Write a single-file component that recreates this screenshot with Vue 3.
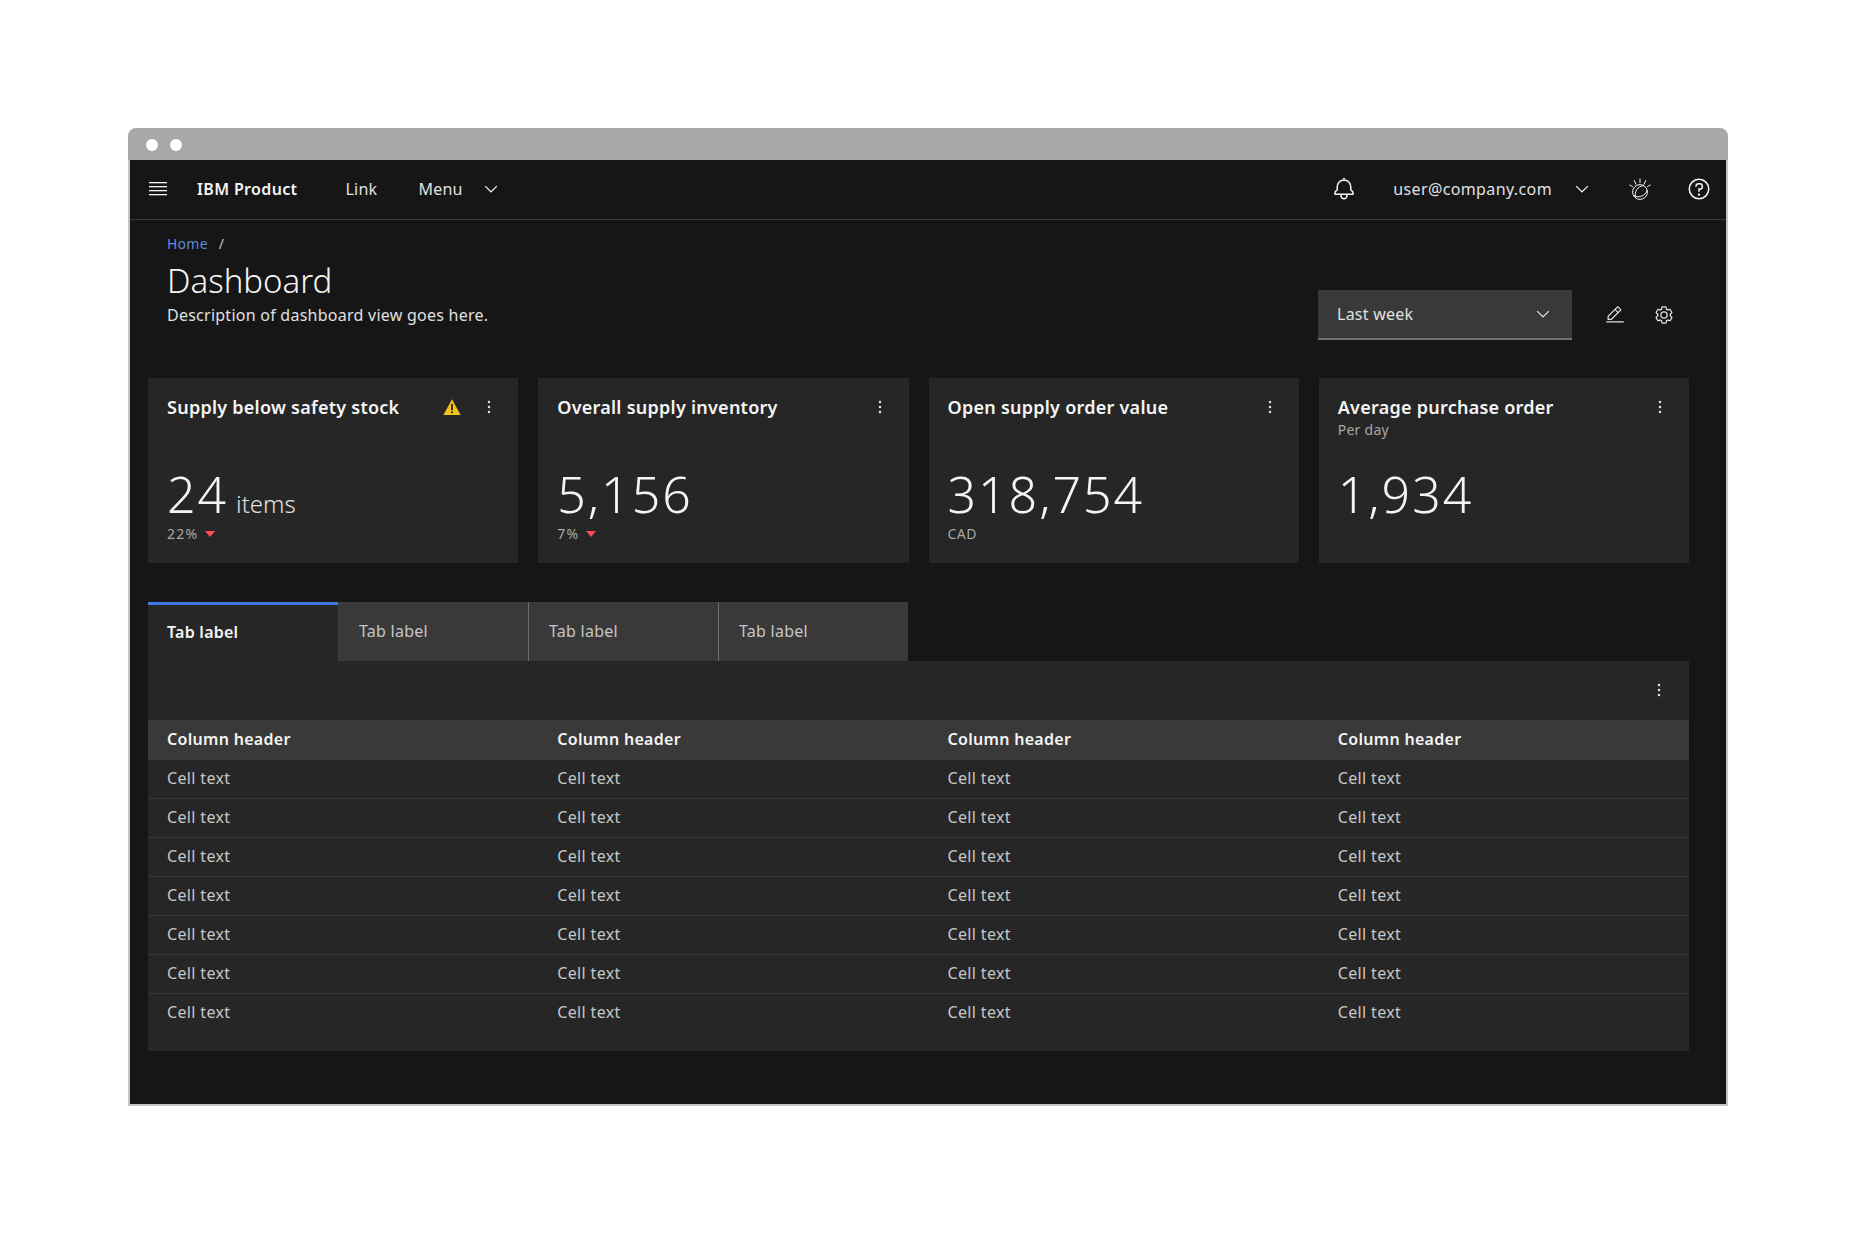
<script setup>
const cards = [
  { title: 'Supply below safety stock', value: '24', unit: 'items', delta: '22%', warn: true },
  { title: 'Overall supply inventory', value: '5,156', delta: '7%' },
  { title: 'Open supply order value', value: '318,754', note: 'CAD' },
  { title: 'Average purchase order', sub: 'Per day', value: '1,934' }
]
const tabs = ['Tab label', 'Tab label', 'Tab label', 'Tab label']
const columns = ['Column header', 'Column header', 'Column header', 'Column header']
const rows = [1, 2, 3, 4, 5, 6, 7]
</script>

<template>
  <div class="page">
    <div class="window">
      <div class="chrome">
        <span class="dot"></span>
        <span class="dot"></span>
      </div>

      <div class="app">
        <header class="topbar">
          <svg class="hamburger" viewBox="0 0 20 20" width="20" height="20" fill="currentColor">
            <rect x="1" y="3" width="18" height="1.3" />
            <rect x="1" y="7" width="18" height="1.3" />
            <rect x="1" y="11" width="18" height="1.3" />
            <rect x="1" y="15" width="18" height="1.3" />
          </svg>
          <span class="brand">IBM Product</span>
          <span class="nav-link">Link</span>
          <span class="nav-menu">Menu</span>
          <svg class="chev" viewBox="0 0 32 32" width="20" height="20" fill="currentColor"><path d="M16 22L6 12 7.4 10.6 16 19.2 24.6 10.6 26 12z" /></svg>

          <div class="topbar-right">
            <svg class="bell" viewBox="0 0 32 32" width="24" height="24" fill="currentColor"><path d="M28.7071,19.293,26,16.5859V13a10.0136,10.0136,0,0,0-9-9.9492V1H15V3.0508A10.0136,10.0136,0,0,0,6,13v3.5859L3.2929,19.293A1,1,0,0,0,3,20v3a1,1,0,0,0,1,1h7v.7768a5.152,5.152,0,0,0,4.5,5.1987A5.0057,5.0057,0,0,0,21,25V24h7a1,1,0,0,0,1-1V20A1,1,0,0,0,28.7071,19.293ZM19,25a3,3,0,0,1-6,0V24h6Zm8-3H5V20.4141L7.707,17.707A1,1,0,0,0,8,17V13a8,8,0,0,1,16,0v4a1,1,0,0,0,.293.707L27,20.4141Z" /></svg>
            <span class="user">user@company.com</span>
            <svg class="chev user-chev" viewBox="0 0 32 32" width="20" height="20" fill="currentColor"><path d="M16 22L6 12 7.4 10.6 16 19.2 24.6 10.6 26 12z" /></svg>
            <svg class="watson" viewBox="0 0 24 24" width="24" height="24" fill="none" stroke="currentColor" stroke-width="1">
              <circle cx="12" cy="15" r="7.4" />
              <path d="M12 1.5V6M6.2 3.2 8 7.6M17.8 3.2 16 7.6M1.4 7.8 4.8 9.8M22.6 7.8 19.2 9.8" />
              <path d="M19.2 13C17.8 18.6 11 21.6 5.4 18.4M15.8 8.6C9.8 9.4 6 14 7.6 21" />
            </svg>
            <svg class="help" viewBox="0 0 32 32" width="24" height="24" fill="currentColor">
              <path d="M16,2A14,14,0,1,0,30,16,14,14,0,0,0,16,2Zm0,26A12,12,0,1,1,28,16,12,12,0,0,1,16,28Z" />
              <circle cx="16" cy="23.5" r="1.5" />
              <path d="M17,8H15.5A4.49,4.49,0,0,0,11,12.5V13h2v-.5A2.5,2.5,0,0,1,15.5,10H17a2.5,2.5,0,0,1,0,5H15v4.5h2V17a4.5,4.5,0,0,0,0-9Z" />
            </svg>
          </div>
        </header>

        <main class="main">
          <section class="page-head">
            <div class="head-text">
              <div class="crumbs"><a class="crumb">Home</a><span class="slash">/</span></div>
              <h1 class="title">Dashboard</h1>
              <p class="desc">Description of dashboard view goes here.</p>
            </div>
            <div class="head-tools">
              <div class="dropdown">
                <span>Last week</span>
                <svg viewBox="0 0 32 32" width="20" height="20" fill="currentColor"><path d="M16 22L6 12 7.4 10.6 16 19.2 24.6 10.6 26 12z" /></svg>
              </div>
              <svg class="tool-edit" viewBox="0 0 32 32" width="20" height="20" fill="currentColor">
                <path d="M2 26H30V28H2z" />
                <path d="M25.4,9c0.8-0.8,0.8-2,0-2.8c0,0,0,0,0,0l-3.6-3.6c-0.8-0.8-2-0.8-2.8,0c0,0,0,0,0,0l-15,15V24h6.4L25.4,9z M20.4,4L24,7.6l-3,3L17.4,7L20.4,4z M6,22v-3.6l10-10l3.6,3.6l-10,10H6z" />
              </svg>
              <svg class="tool-gear" viewBox="0 0 32 32" width="20" height="20" fill="currentColor">
                <path d="M27,16.76c0-.25,0-.5,0-.76s0-.51,0-.77l1.92-1.68A2,2,0,0,0,29.3,11L26.94,7a2,2,0,0,0-1.73-1,2,2,0,0,0-.64.1l-2.43.82a11.35,11.35,0,0,0-1.31-.75l-.51-2.52a2,2,0,0,0-2-1.61H13.64a2,2,0,0,0-2,1.61l-.51,2.52a11.48,11.48,0,0,0-1.32.75L7.43,6.06A2,2,0,0,0,6.79,6,2,2,0,0,0,5.06,7L2.7,11a2,2,0,0,0,.41,2.51L5,15.24c0,.25,0,.5,0,.76s0,.51,0,.77L3.11,18.45A2,2,0,0,0,2.7,21L5.06,25a2,2,0,0,0,1.73,1,2,2,0,0,0,.64-.1l2.43-.82a11.35,11.35,0,0,0,1.31.75l.51,2.52a2,2,0,0,0,2,1.61h4.72a2,2,0,0,0,2-1.61l.51-2.52a11.48,11.48,0,0,0,1.32-.75l2.42.82a2,2,0,0,0,.64.1,2,2,0,0,0,1.73-1L29.3,21a2,2,0,0,0-.41-2.51ZM25.23,24l-3.43-1.16a8.86,8.86,0,0,1-2.71,1.57L18.36,28H13.64l-.71-3.55a9.36,9.36,0,0,1-2.7-1.57L6.79,24,4.43,20l2.72-2.4a8.9,8.9,0,0,1,0-3.13L4.43,12,6.79,8l3.43,1.16a8.86,8.86,0,0,1,2.71-1.57L13.64,4h4.72l.71,3.55a9.36,9.36,0,0,1,2.7,1.57L25.21,8,27.57,12l-2.72,2.4a8.9,8.9,0,0,1,0,3.13L27.57,20Z" />
                <path d="M16,22a6,6,0,1,1,6-6A5.94,5.94,0,0,1,16,22Zm0-10a3.91,3.91,0,0,0-4,4,3.91,3.91,0,0,0,4,4,3.91,3.91,0,0,0,4-4A3.91,3.91,0,0,0,16,12Z" />
              </svg>
            </div>
          </section>

          <section class="cards">
            <article v-for="card in cards" :key="card.title" class="card">
              <div class="card-top">
                <div class="card-heading">
                  <h2 class="card-title">{{ card.title }}</h2>
                  <div v-if="card.sub" class="card-sub">{{ card.sub }}</div>
                </div>
                <svg v-if="card.warn" class="warn" viewBox="0 0 20 20" width="20" height="20">
                  <path fill="#f1c21b" d="M10 2.2 18.6 18H1.4z" />
                  <path fill="#161616" d="M9.2 7h1.6v6.2H9.2z" />
                  <circle fill="#161616" cx="10" cy="15.2" r="1" />
                </svg>
                <svg class="kebab" viewBox="0 0 32 32" width="20" height="20" fill="currentColor">
                  <circle cx="16" cy="8" r="2" /><circle cx="16" cy="16" r="2" /><circle cx="16" cy="24" r="2" />
                </svg>
              </div>
              <div class="card-value">
                <span class="num">{{ card.value }}</span>
                <span v-if="card.unit" class="unit">{{ card.unit }}</span>
              </div>
              <div class="card-foot">
                <template v-if="card.delta">
                  <span class="delta">{{ card.delta }}</span>
                  <svg viewBox="0 0 10 6" width="10" height="6"><path fill="#fa4d56" d="M0 0h10L5 6z" /></svg>
                </template>
                <span v-else-if="card.note">{{ card.note }}</span>
              </div>
            </article>
          </section>

          <nav class="tabs">
            <div v-for="(tab, i) in tabs" :key="i" class="tab" :class="{ active: i === 0 }"><span>{{ tab }}</span></div>
          </nav>

          <section class="panel">
            <div class="panel-bar">
              <svg class="kebab" viewBox="0 0 32 32" width="20" height="20" fill="currentColor">
                <circle cx="16" cy="8" r="2" /><circle cx="16" cy="16" r="2" /><circle cx="16" cy="24" r="2" />
              </svg>
            </div>
            <div class="tr th">
              <div v-for="(col, i) in columns" :key="i" class="td">{{ col }}</div>
            </div>
            <div v-for="row in rows" :key="row" class="tr">
              <div v-for="c in 4" :key="c" class="td">Cell text</div>
            </div>
          </section>
        </main>
      </div>
    </div>
  </div>
</template>

<style>
html, body { margin: 0; background: #fff; }
</style>

<style scoped>
.page {
  height: 1236px;
  padding: 128px 128px 0;
  box-sizing: border-box;
  overflow: hidden;
  font-family: "Noto Sans", "Open Sans", sans-serif;
  letter-spacing: 0.25px;
}

.window {
  width: 1600px;
}

.chrome {
  height: 32px;
  background: #a8a8a8;
  border-radius: 8px 8px 0 0;
  display: flex;
  align-items: center;
  gap: 12px;
  padding-left: 18px;
  padding-top: 1px;
  box-sizing: border-box;
}

.dot {
  width: 12px;
  height: 12px;
  border-radius: 50%;
  background: #fff;
}

.app {
  height: 944px;
  background: #161616;
  color: #f4f4f4;
  border: 2px solid #c6c6c6;
  border-top: 0;
}

/* top bar */
.topbar {
  height: 60px;
  box-sizing: border-box;
  border-bottom: 1px solid #393939;
  display: flex;
  align-items: center;
  padding-left: 18px;
  padding-bottom: 2px;
  font-size: 16px;
}

.hamburger { margin-right: 29px; }
.brand { font-weight: 600; margin-right: 48px; font-size: 16px; letter-spacing: 0.35px; }
.nav-link { margin-right: 41px; color: #e0e0e0; }
.nav-menu { margin-right: 18px; color: #e0e0e0; }

.topbar-right {
  margin-left: auto;
  display: flex;
  align-items: center;
  padding-right: 15px;
}

.bell { margin-right: 37px; }
.user { margin-right: 20px; letter-spacing: 0.38px; color: #e0e0e0; }
.user-chev { margin-right: 36px; }
.watson { margin-right: 35px; }

/* page heading */
.main {
  padding: 0 37px 0 18px;
}

.page-head {
  height: 158px;
  padding-left: 19px;
  display: flex;
  justify-content: space-between;
}

.crumbs {
  display: flex;
  gap: 11px;
  font-size: 14px;
  line-height: 18px;
  margin-top: 15px;
  color: #c6c6c6;
}

.crumb { color: #5f8bdb; }

.title {
  margin: 7px 0 0;
  font-size: 33px;
  font-weight: 300;
  line-height: 42px;
  letter-spacing: 0;
  color: #f4f4f4;
}

.desc {
  margin: 1px 0 0;
  font-size: 16px;
  line-height: 24px;
  color: #e0e0e0;
}

.head-tools {
  margin-top: 70px;
  margin-right: 2px;
  height: 49px;
  display: flex;
  align-items: center;
  color: #e0e0e0;
}

.dropdown {
  width: 254px;
  height: 50px;
  box-sizing: border-box;
  padding: 1px 19px 0 19px;
  margin-right: 33px;
  background: #393939;
  border-bottom: 2px solid #6f6f6f;
  display: flex;
  align-items: center;
  justify-content: space-between;
  font-size: 16px;
}

.tool-edit { margin-right: 29px; }
.tool-gear { margin-right: 13px; }

/* metric cards */
.cards {
  display: grid;
  grid-template-columns: repeat(4, 1fr);
  gap: 20px;
}

.card {
  height: 185px;
  background: #262626;
  box-sizing: border-box;
  padding: 17px 19px 0 19px;
  display: flex;
  flex-direction: column;
}

.card-top {
  display: flex;
  align-items: flex-start;
  height: 61px;
}

.card-heading { flex: 1; }

.card-title {
  margin: 0;
  font-size: 18px;
  line-height: 24px;
  font-weight: 600;
  color: #f4f4f4;
}

.card-sub {
  margin-top: 2px;
  font-size: 14px;
  line-height: 18px;
  color: #a8a8a8;
}

.warn { margin-right: 17px; margin-top: 2px; }
.kebab { color: #e0e0e0; }
.card-top .kebab { margin-top: 2px; }

.card-value {
  height: 60px;
  display: flex;
  align-items: baseline;
  gap: 8px;
  line-height: 60px;
  margin-top: 8px;
}

.num { font-size: 50px; font-weight: 300; letter-spacing: 2px; color: #f4f4f4; }
.unit { font-size: 24px; font-weight: 300; letter-spacing: 0; color: #e0e0e0; }

.card-foot {
  display: flex;
  align-items: center;
  gap: 7px;
  font-size: 14px;
  line-height: 18px;
  margin-top: 1px;
  letter-spacing: 0.5px;
  color: #a8a8a8;
}

.delta { letter-spacing: 1.2px; }

/* tabs */
.tabs {
  display: flex;
  margin-top: 39px;
}

.tab {
  width: 190px;
  height: 59px;
  box-sizing: border-box;
  background: #393939;
  color: #c6c6c6;
  font-size: 16px;
  padding-left: 20px;
  padding-bottom: 1px;
  display: flex;
  align-items: center;
  border-left: 1px solid #6f6f6f;
}

.tab.active {
  background: #262626;
  color: #f4f4f4;
  font-weight: 600;
  padding-left: 19px;
  padding-bottom: 2px;
  border-left: 0;
  border-top: 3px solid #4178e6;
}

.tab:nth-child(2) { border-left: 0; padding-left: 21px; }

/* table */
.panel {
  height: 390px;
  background: #262626;
}

.panel-bar {
  height: 59px;
  display: flex;
  align-items: center;
  justify-content: flex-end;
  padding-right: 20px;
  box-sizing: border-box;
  padding-bottom: 1px;
}

.tr {
  display: grid;
  grid-template-columns: repeat(4, 1fr);
  gap: 20px;
  height: 39px;
  box-sizing: border-box;
  border-bottom: 1px solid #393939;
  align-items: center;
  padding-bottom: 3px;
  font-size: 16px;
  letter-spacing: 0.35px;
  color: #c6c6c6;
}

.tr:last-child { border-bottom: 0; }

.td { padding-left: 19px; }

.th {
  height: 40px;
  background: #393939;
  border-bottom: 0;
  letter-spacing: 0.3px;
  color: #f4f4f4;
  font-weight: 600;
}
</style>
